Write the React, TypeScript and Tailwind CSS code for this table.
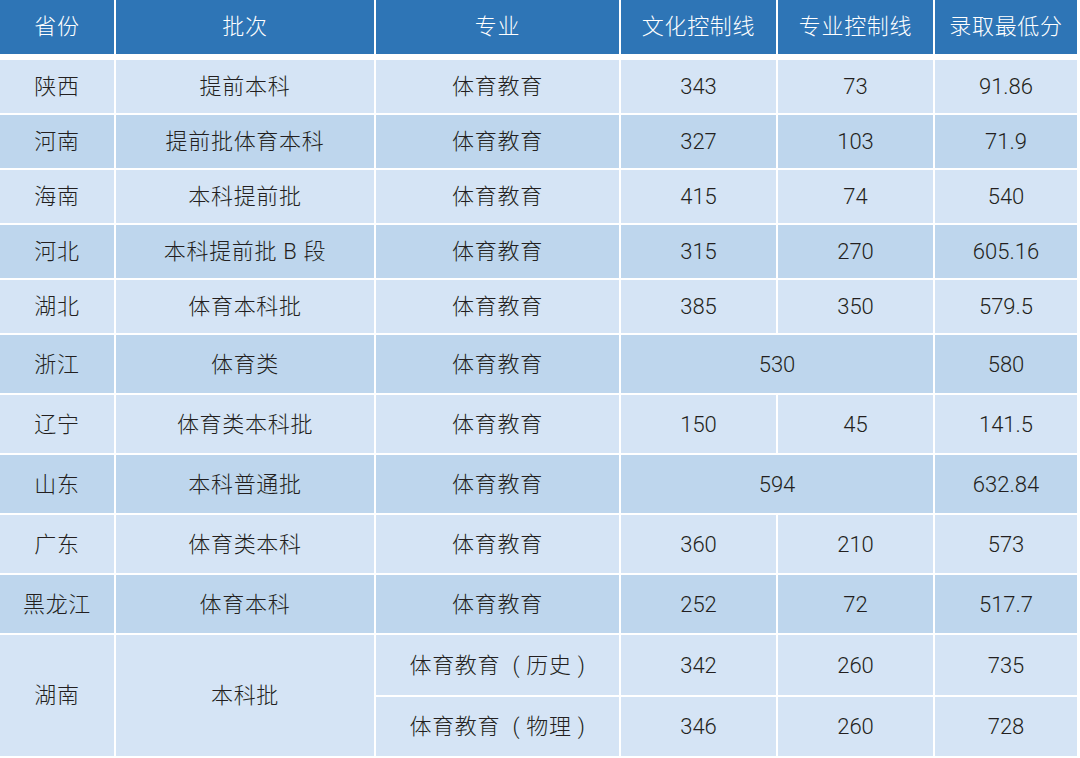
const cols = 'grid-cols-[114px_258px_243px_155px_155px_142px]'

interface Row {
  province: string
  batch: string
  major: string
  culture: string
  pro?: string
  min: string
}

const rows: Row[] = [
  { province: '陕西', batch: '提前本科', major: '体育教育', culture: '343', pro: '73', min: '91.86' },
  { province: '河南', batch: '提前批体育本科', major: '体育教育', culture: '327', pro: '103', min: '71.9' },
  { province: '海南', batch: '本科提前批', major: '体育教育', culture: '415', pro: '74', min: '540' },
  { province: '河北', batch: '本科提前批 B 段', major: '体育教育', culture: '315', pro: '270', min: '605.16' },
  { province: '湖北', batch: '体育本科批', major: '体育教育', culture: '385', pro: '350', min: '579.5' },
  { province: '浙江', batch: '体育类', major: '体育教育', culture: '530', min: '580' },
  { province: '辽宁', batch: '体育类本科批', major: '体育教育', culture: '150', pro: '45', min: '141.5' },
  { province: '山东', batch: '本科普通批', major: '体育教育', culture: '594', min: '632.84' },
  { province: '广东', batch: '体育类本科', major: '体育教育', culture: '360', pro: '210', min: '573' },
  { province: '黑龙江', batch: '体育本科', major: '体育教育', culture: '252', pro: '72', min: '517.7' },
]

const heights = ['h-[53px]', 'h-[53px]', 'h-[53px]', 'h-[53px]', 'h-[53px]', 'h-[58px]', 'h-[58px]', 'h-[58px]', 'h-[58px]', 'h-[58px]']

const font = "font-['Roboto','Noto_Sans_CJK_SC',sans-serif]"

function Cell({ children, className = '' }: { children?: React.ReactNode; className?: string }) {
  return (
    <div className={`flex items-center justify-center font-light text-[#231f20] ${className}`}>
      {children}
    </div>
  )
}

// CJK text cell, slightly larger with a bit of tracking
const zh = 'text-[22px] tracking-[0.7px]'
const num = 'text-[22px]'

export default function App() {
  return (
    <div className={`w-[1080px] h-[758px] bg-white ${font}`}>
      <div className="w-[1077px]">
        {/* header */}
        <div className={`grid ${cols} gap-x-[2px] h-[54px]`}>
          {['省份', '批次', '专业', '文化控制线', '专业控制线', '录取最低分'].map(h => (
            <div key={h} className="bg-[#2e75b6] text-white text-[22px] tracking-[0.7px] font-light flex items-center justify-center pb-[2px]">
              {h}
            </div>
          ))}
        </div>

        <div className={`grid ${cols} gap-[2px] mt-[6px]`}>
          {rows.map((r, i) => {
            const bg = i % 2 === 0 ? 'bg-[#d5e4f5]' : 'bg-[#bed6ed]'
            const h = heights[i]
            return (
              <div key={r.province} className="contents">
                <Cell className={`${bg} ${h} ${zh}`}>{r.province}</Cell>
                <Cell className={`${bg} ${h} ${zh}`}>{r.batch}</Cell>
                <Cell className={`${bg} ${h} ${zh}`}>{r.major}</Cell>
                {r.pro ? (
                  <>
                    <Cell className={`${bg} ${h} ${num}`}>{r.culture}</Cell>
                    <Cell className={`${bg} ${h} ${num}`}>{r.pro}</Cell>
                  </>
                ) : (
                  <Cell className={`${bg} ${h} col-span-2 ${num}`}>{r.culture}</Cell>
                )}
                <Cell className={`${bg} ${h} ${num}`}>{r.min}</Cell>
              </div>
            )
          })}

          {/* 湖南 merged */}
          <Cell className={`bg-[#d5e4f5] row-span-2 ${zh}`}>湖南</Cell>
          <Cell className={`bg-[#d5e4f5] row-span-2 ${zh}`}>本科批</Cell>
          <Cell className={`bg-[#d5e4f5] h-[60px] ${zh} whitespace-pre`}>体育教育  ( 历史 )</Cell>
          <Cell className={`bg-[#d5e4f5] h-[60px] ${num}`}>342</Cell>
          <Cell className={`bg-[#d5e4f5] h-[60px] ${num}`}>260</Cell>
          <Cell className={`bg-[#d5e4f5] h-[60px] ${num}`}>735</Cell>
          <Cell className={`bg-[#d5e4f5] h-[59px] ${zh} whitespace-pre`}>体育教育  ( 物理 )</Cell>
          <Cell className={`bg-[#d5e4f5] h-[59px] ${num}`}>346</Cell>
          <Cell className={`bg-[#d5e4f5] h-[59px] ${num}`}>260</Cell>
          <Cell className={`bg-[#d5e4f5] h-[59px] ${num}`}>728</Cell>
        </div>
      </div>
    </div>
  )
}
